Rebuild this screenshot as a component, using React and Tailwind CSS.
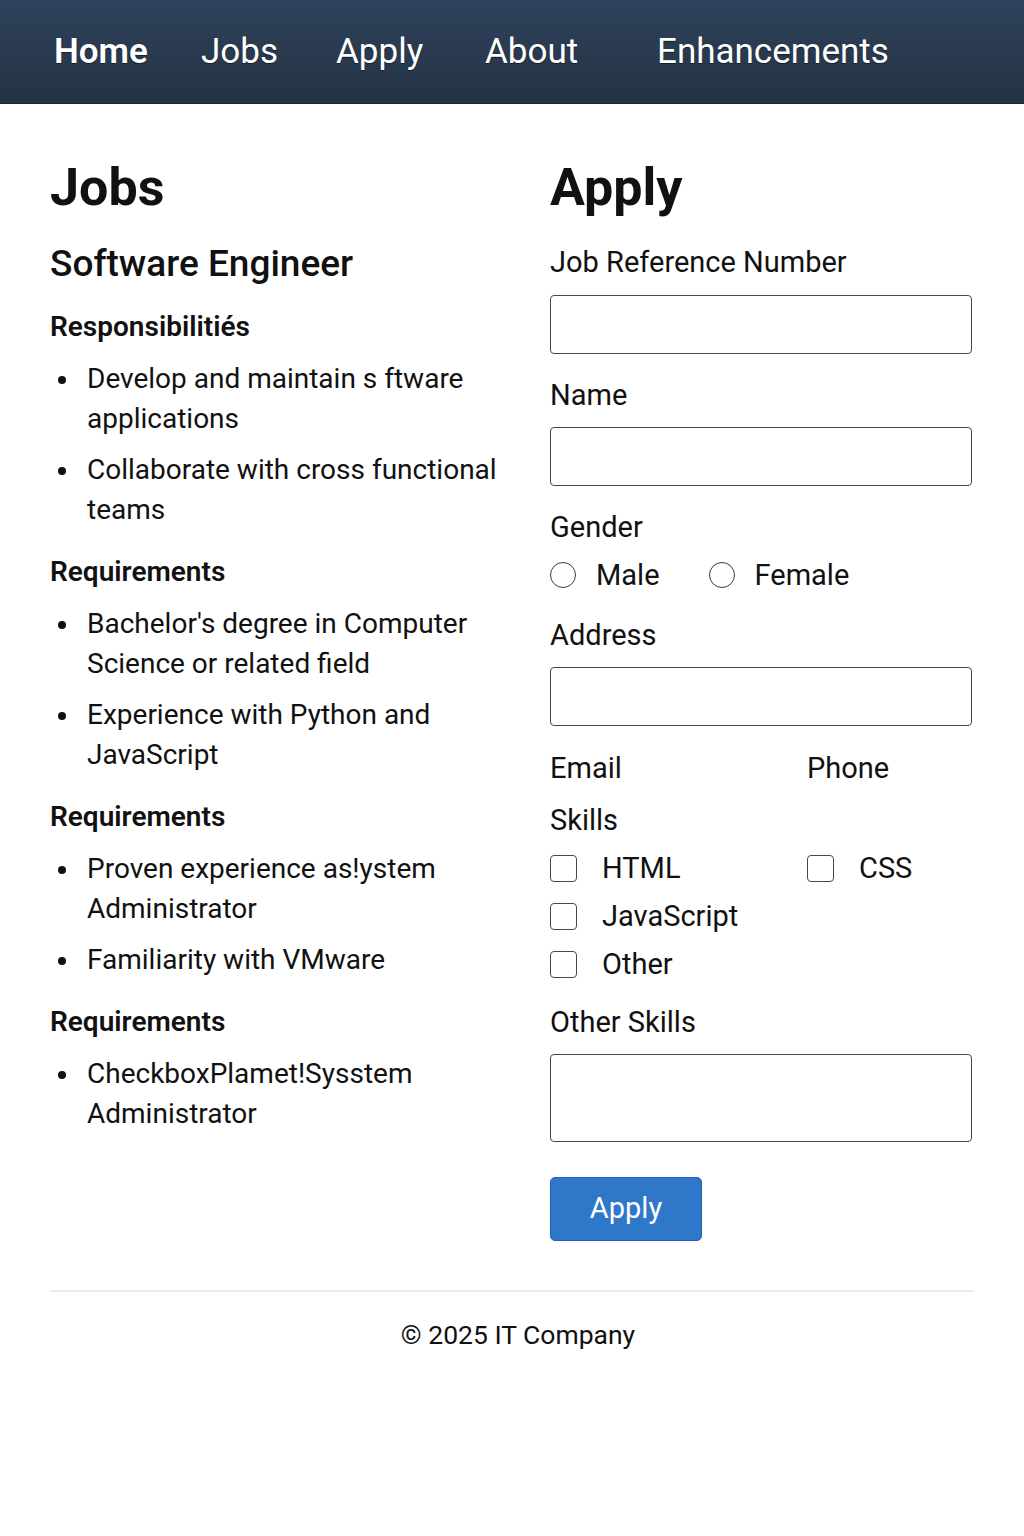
import React from "react";

const navItems = [
  { label: "Home", w: "w-[147px]", bold: true },
  { label: "Jobs", w: "w-[135px]" },
  { label: "Apply", w: "w-[149px]" },
  { label: "About", w: "w-[172px]" },
  { label: "Enhancements", w: "" },
];

const sections = [
  {
    title: "Responsibilitiés",
    items: ["Develop and maintain s ftware applications", "Collaborate with cross functional teams"],
  },
  {
    title: "Requirements",
    items: ["Bachelor's degree in Computer Science or related field", "Experience with Python and JavaScript"],
  },
  {
    title: "Requirements",
    items: ["Proven experience as!ystem Administrator", "Familiarity with VMware"],
  },
  {
    title: "Requirements",
    items: ["CheckboxPlamet!Sysstem Administrator"],
  },
];

const Label = ({ children, className = "" }) => (
  <label className={`block text-[29px] leading-[34px] text-[#111] ${className}`}>{children}</label>
);

const TextBox = ({ className = "" }) => (
  <div className={`w-full rounded-[4px] border-[1.5px] border-[#3b4b5e] bg-white ${className}`} />
);

const Radio = ({ label }) => (
  <div className="flex items-center">
    <span className="w-[26px] h-[26px] rounded-full border-[1.5px] border-[#2d3e52] bg-white" />
    <span className="ml-[20px] text-[29px] leading-[34px]">{label}</span>
  </div>
);

const Check = ({ label }) => (
  <div className="flex items-center h-[34px]">
    <span className="w-[27px] h-[27px] rounded-[4px] border-[1.5px] border-[#3b4b5e] bg-white" />
    <span className="ml-[25px] text-[29px] leading-[34px]">{label}</span>
  </div>
);

const App = () => {
  return (
    <div className="min-h-[1536px] bg-white text-[#111]" style={{ fontFamily: "Roboto, 'Liberation Sans', sans-serif" }}>
      {/* nav */}
      <nav className="h-[104px] bg-gradient-to-b from-[#2f425b] to-[#243345] border-b border-[#1b2635] flex items-center pl-[54px]">
        {navItems.map((n) => (
          <a
            key={n.label}
            className={`${n.w} text-[35px] leading-none text-white ${n.bold ? "font-semibold" : "font-normal"}`}
            style={{ textShadow: "0 1px 1px rgba(0,0,0,0.5)" }}
          >
            {n.label}
          </a>
        ))}
      </nav>

      <main className="px-[50px] pt-[54px]">
        <div className="grid grid-cols-[450px_422px] gap-x-[50px]">
          {/* jobs column */}
          <section>
            <h1 className="text-[52px] leading-[60px] font-bold">Jobs</h1>
            <h2 className="mt-[23px] text-[37px] leading-[46px] font-medium">Software Engineer</h2>
            {sections.map((s, i) => (
              <div key={i} className={i === 0 ? "mt-[22px]" : "mt-[24px]"}>
                <h3 className="text-[28px] leading-[36px] font-semibold">{s.title}</h3>
                <ul className="mt-[14px] space-y-[11px]">
                  {s.items.map((it) => (
                    <li key={it} className="flex text-[28px] leading-[40px]">
                      <span className="w-[37px] shrink-0 flex items-start pt-[17px] pl-[8px]">
                        <span className="w-[8px] h-[8px] rounded-full bg-[#111]" />
                      </span>
                      <span>{it}</span>
                    </li>
                  ))}
                </ul>
              </div>
            ))}
          </section>

          {/* apply column */}
          <section>
            <h1 className="text-[52px] leading-[60px] font-bold">Apply</h1>
            <Label className="mt-[27px]">Job Reference Number</Label>
            <TextBox className="mt-[16px] h-[59px]" />
            <Label className="mt-[24px]">Name</Label>
            <TextBox className="mt-[15px] h-[59px]" />
            <Label className="mt-[24px]">Gender</Label>
            <div className="mt-[14px] flex items-center">
              <Radio label="Male" />
              <div className="ml-[49px]">
                <Radio label="Female" />
              </div>
            </div>
            <Label className="mt-[26px]">Address</Label>
            <TextBox className="mt-[15px] h-[59px]" />
            <div className="mt-[25px] grid grid-cols-[257px_1fr]">
              <Label>Email</Label>
              <Label>Phone</Label>
            </div>
            <Label className="mt-[18px]">Skills</Label>
            <div className="mt-[14px] grid grid-cols-[257px_1fr] gap-y-[14px]">
              <Check label="HTML" />
              <Check label="CSS" />
              <Check label="JavaScript" />
              <div />
              <Check label="Other" />
            </div>
            <Label className="mt-[24px]">Other Skills</Label>
            <TextBox className="mt-[15px] h-[88px]" />
            <button className="mt-[35px] w-[152px] h-[64px] rounded-[5px] bg-[#2f78c9] border border-[#1f60b5] text-white text-[29px]">
              Apply
            </button>
          </section>
        </div>

        <hr className="mt-[49px] border-0 border-t-2 border-[#ececec]" />
        <footer className="mt-[26px] pl-[12px] text-center text-[26.5px] leading-[34px]">© 2025 IT Company</footer>
      </main>
    </div>
  );
};

export default App;
